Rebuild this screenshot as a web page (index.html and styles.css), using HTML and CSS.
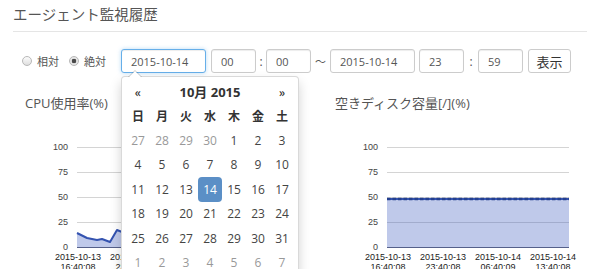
FILE: index.html
```html
<!DOCTYPE html>
<html lang="ja">
<head>
<meta charset="utf-8">
<title>エージェント監視履歴</title>
<link rel="stylesheet" href="styles.css">
</head>
<body>
<div class="page">
  <h1 class="title">エージェント監視履歴</h1>

  <div class="filters">
    <label class="radio"><input type="radio" name="mode">相対</label>
    <label class="radio radio-last"><input type="radio" name="mode" checked>絶対</label>

    <div class="date-wrap">
      <input class="field date focus" type="text" value="2015-10-14">
      <div class="datepicker">
        <table class="cal">
          <thead>
            <tr>
              <th class="nav">«</th>
              <th class="switch" colspan="5">10月 2015</th>
              <th class="nav">»</th>
            </tr>
            <tr class="dow">
              <th>日</th><th>月</th><th>火</th><th>水</th><th>木</th><th>金</th><th>土</th>
            </tr>
          </thead>
          <tbody>
            <tr><td class="old">27</td><td class="old">28</td><td class="old">29</td><td class="old">30</td><td>1</td><td>2</td><td>3</td></tr>
            <tr><td>4</td><td>5</td><td>6</td><td>7</td><td>8</td><td>9</td><td>10</td></tr>
            <tr><td>11</td><td>12</td><td>13</td><td class="active">14</td><td>15</td><td>16</td><td>17</td></tr>
            <tr><td>18</td><td>19</td><td>20</td><td>21</td><td>22</td><td>23</td><td>24</td></tr>
            <tr><td>25</td><td>26</td><td>27</td><td>28</td><td>29</td><td>30</td><td>31</td></tr>
            <tr><td class="new">1</td><td class="new">2</td><td class="new">3</td><td class="new">4</td><td class="new">5</td><td class="new">6</td><td class="new">7</td></tr>
          </tbody>
        </table>
      </div>
    </div>
    <input class="field time" type="text" value="00">
    <span class="sep colon">:</span>
    <input class="field time" type="text" value="00">
    <span class="sep tilde">〜</span>
    <input class="field date date-end" type="text" value="2015-10-14">
    <input class="field time" type="text" value="23">
    <span class="sep colon2">:</span>
    <input class="field time time-last" type="text" value="59">
    <button class="btn" type="button">表示</button>
  </div>

  <div class="charts">
    <section class="chart">
      <h2 class="chart-title">CPU使用率(%)</h2>
      <svg class="plot" width="300" height="160" viewBox="0 0 300 160">
        <g class="grid">
          <line x1="64" y1="31.5" x2="246" y2="31.5"/>
          <line x1="64" y1="56.5" x2="246" y2="56.5"/>
          <line x1="64" y1="81.5" x2="246" y2="81.5"/>
          <line x1="64" y1="106.5" x2="246" y2="106.5"/>
        </g>
        <path class="area" d="M64 131 L64 117 L74 122 L84 124 L89 123 L97 126 L104 114 L109 116 L119 119 L129 121 L139 120 L149 122 L159 118 L169 121 L179 123 L189 120 L199 122 L209 119 L219 121 L229 120 L239 122 L246 121 L246 131 Z"/>
        <polyline class="line" points="64,117 74,122 84,124 89,123 97,126 104,114 109,116 119,119 129,121 139,120 149,122 159,118 169,121 179,123 189,120 199,122 209,119 219,121 229,120 239,122 246,121"/>
        <line class="base" x1="64" y1="131.5" x2="246" y2="131.5"/>
        <g class="ylab">
          <text x="55" y="34">100</text>
          <text x="55" y="59">75</text>
          <text x="55" y="84">50</text>
          <text x="55" y="109">25</text>
          <text x="55" y="134">0</text>
        </g>
        <g class="xlab">
          <text x="65" y="144">2015-10-13</text><text x="65" y="154">16:40:08</text>
          <text x="120" y="144">2015-10-13</text><text x="120" y="154">23:40:08</text>
          <text x="175" y="144">2015-10-14</text><text x="175" y="154">06:40:09</text>
          <text x="230" y="144">2015-10-14</text><text x="230" y="154">13:40:08</text>
        </g>
      </svg>
    </section>

    <section class="chart">
      <h2 class="chart-title">空きディスク容量[/](%)</h2>
      <svg class="plot" width="264" height="160" viewBox="0 0 264 160">
        <g class="grid">
          <line x1="64" y1="31.5" x2="246" y2="31.5"/>
          <line x1="64" y1="56.5" x2="246" y2="56.5"/>
          <line x1="64" y1="81.5" x2="246" y2="81.5"/>
          <line x1="64" y1="106.5" x2="246" y2="106.5"/>
        </g>
        <path class="area" d="M64 131 L64 83 L246 83 L246 131 Z"/>
        <line class="line" x1="64" y1="83" x2="246" y2="83"/>
        <line class="beads" x1="64" y1="83" x2="246" y2="83"/>
        <line class="base" x1="64" y1="131.5" x2="246" y2="131.5"/>
        <g class="ylab">
          <text x="55" y="34">100</text>
          <text x="55" y="59">75</text>
          <text x="55" y="84">50</text>
          <text x="55" y="109">25</text>
          <text x="55" y="134">0</text>
        </g>
        <g class="xlab">
          <text x="65" y="144">2015-10-13</text><text x="65" y="154">16:40:08</text>
          <text x="120" y="144">2015-10-13</text><text x="120" y="154">23:40:08</text>
          <text x="175" y="144">2015-10-14</text><text x="175" y="154">06:40:09</text>
          <text x="230" y="144">2015-10-14</text><text x="230" y="154">13:40:08</text>
        </g>
      </svg>
    </section>
  </div>
</div>
</body>
</html>
```

FILE: styles.css
```css
html, body {
  margin: 0;
  background: #fff;
  overflow: hidden;
}

body {
  font-family: "Open Sans", "Noto Sans CJK JP", sans-serif;
  color: #555;
}

.page {
  padding: 0 13px;
}

.title {
  margin: 0;
  padding: 3px 0 6px;
  font-family: "Noto Sans CJK JP", sans-serif;
  font-size: 14.5px;
  line-height: 22px;
  font-weight: normal;
  color: #555;
  border-bottom: 1px solid #e5e5e5;
}

/* ---------- filter row ---------- */
.filters {
  display: flex;
  align-items: center;
  height: 24px;
  margin-top: 17px;
  padding-left: 9px;
}

.radio {
  display: flex;
  align-items: center;
  font-family: "Noto Sans CJK JP", sans-serif;
  font-size: 11px;
  line-height: 14px;
  color: #555;
  margin-right: 10px;
}

.radio-last {
  margin-right: 15px;
}

.radio input {
  appearance: none;
  -webkit-appearance: none;
  box-sizing: border-box;
  width: 10px;
  height: 10px;
  margin: 0 5px 0 0;
  border: 1px solid #b8b8b8;
  border-radius: 50%;
  background: linear-gradient(#fcfcfc, #dedede);
}

.radio input:checked {
  background: radial-gradient(circle, #4a4a4a 0 2px, #e6e6e6 2.6px);
}

.date-wrap {
  position: relative;
  margin-right: 5px;
}

.field {
  box-sizing: border-box;
  height: 24px;
  margin: 0;
  padding: 0 9px;
  border: 1px solid #ccc;
  border-radius: 3px;
  background: #fff;
  font-family: "Open Sans", sans-serif;
  font-size: 11px;
  color: #555;
  box-shadow: inset 0 1px 1px rgba(0, 0, 0, .075);
  outline: none;
}

.field.date {
  display: block;
  width: 85px;
}

.field.time {
  width: 45px;
}

.field.focus {
  border-color: #66afe9;
  box-shadow: inset 0 1px 1px rgba(0, 0, 0, .075), 0 0 4px rgba(102, 175, 233, .45);
}

.date-end {
  margin-right: 4px;
}

.time-last {
  margin-right: 5px;
}

.sep {
  text-align: center;
  font-size: 12px;
  color: #555;
}

.colon {
  width: 10px;
}

.colon2 {
  width: 14px;
}

.tilde {
  width: 19px;
  font-family: "Noto Sans CJK JP", sans-serif;
  font-size: 11px;
}

.btn {
  box-sizing: border-box;
  width: 43px;
  height: 24px;
  padding: 0;
  border: 1px solid #ccc;
  border-radius: 3px;
  background: #fff;
  font-family: "Noto Sans CJK JP", sans-serif;
  font-size: 13px;
  color: #333;
}

/* ---------- datepicker ---------- */
.datepicker {
  position: absolute;
  top: 27px;
  left: 0;
  z-index: 10;
  box-sizing: border-box;
  width: 178px;
  padding: 2px 4px 4px;
  background: #fff;
  border: 1px solid rgba(0, 0, 0, .15);
  border-radius: 4px;
  box-shadow: 0 6px 12px rgba(0, 0, 0, .175);
}

.datepicker::before {
  content: "";
  position: absolute;
  top: -7px;
  left: 6px;
  border-left: 7px solid transparent;
  border-right: 7px solid transparent;
  border-bottom: 7px solid rgba(0, 0, 0, .2);
}

.datepicker::after {
  content: "";
  position: absolute;
  top: -6px;
  left: 7px;
  border-left: 6px solid transparent;
  border-right: 6px solid transparent;
  border-bottom: 6px solid #fff;
}

.cal {
  border-collapse: separate;
  border-spacing: 0;
}

.cal th,
.cal td {
  width: 24px;
  height: 24.5px;
  padding: 0;
  text-align: center;
  font-size: 12px;
  color: #444;
}

.cal th {
  font-family: "Noto Sans CJK JP", sans-serif;
  font-weight: bold;
  color: #333;
}

.cal .nav {
  font-size: 12px;
}

.cal .switch {
  width: auto;
  font-family: "Open Sans", "Noto Sans CJK JP", sans-serif;
  font-size: 13px;
}

.cal .dow th {
  font-size: 12px;
}

.cal td.old,
.cal td.new {
  color: #999;
}

.cal td.active {
  background: #5b8fc6;
  color: #fff;
  border-radius: 4px;
}

/* ---------- charts ---------- */
.charts {
  display: grid;
  grid-template-columns: 300px 1fr;
  column-gap: 10px;
  margin-top: 17px;
}

.chart-title {
  margin: 0;
  padding-left: 12px;
  font-family: "Open Sans", "Noto Sans CJK JP", sans-serif;
  font-size: 13px;
  line-height: 26px;
  font-weight: normal;
  color: #555;
}

.plot {
  display: block;
}

.grid line {
  stroke: #d4d4d4;
  stroke-width: 1;
}

.area {
  fill: rgb(60, 90, 190);
  fill-opacity: .33;
}

.line {
  fill: none;
  stroke: #3453b0;
  stroke-width: 2;
  stroke-linejoin: round;
}

.beads {
  stroke: #24408f;
  stroke-width: 2.4;
  stroke-dasharray: 3.5 2;
}

.base {
  stroke: #55608a;
  stroke-width: 1;
}

.ylab text {
  font-family: "Liberation Sans", Arial, sans-serif;
  font-size: 9px;
  fill: #444;
  text-anchor: end;
}

.xlab text {
  font-family: "Liberation Sans", Arial, sans-serif;
  font-size: 9px;
  fill: #222;
  text-anchor: middle;
}
```
